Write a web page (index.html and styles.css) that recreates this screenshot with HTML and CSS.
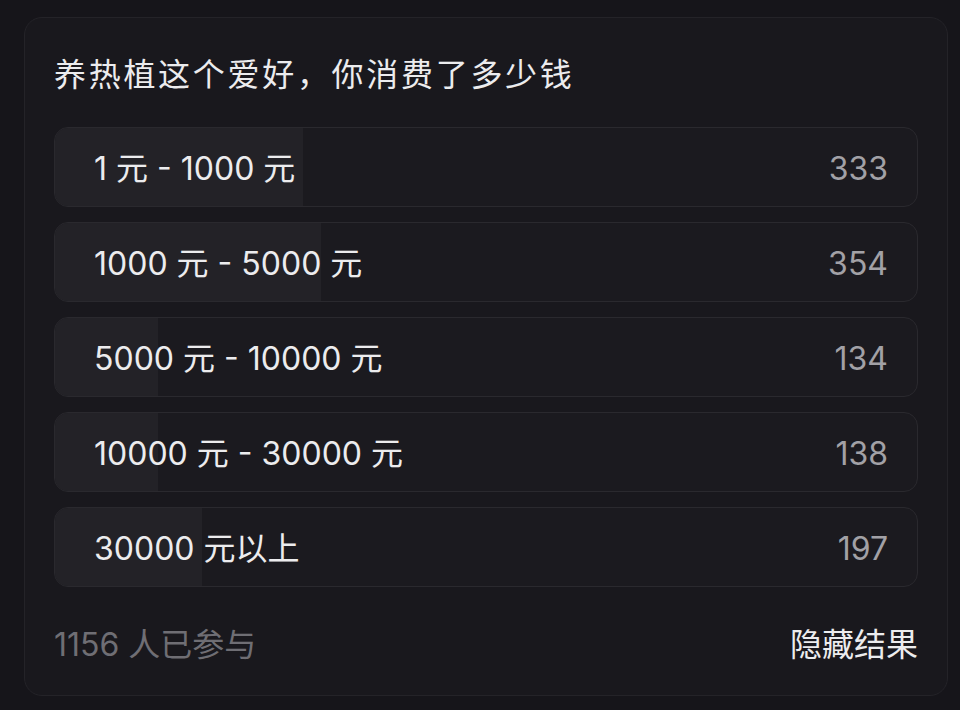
FILE: index.html
```html
<!DOCTYPE html>
<html lang="zh-CN">
<head>
<meta charset="utf-8">
<link rel="stylesheet" href="styles.css">
</head>
<body>
<div class="card">
  <div class="title">养热植这个爱好，你消费了多少钱</div>
  <div class="options">
    <div class="option"><div class="fill" style="width:28.8%"></div><span class="label">1 元 - 1000 元</span><span class="count">333</span></div>
    <div class="option"><div class="fill" style="width:30.9%"></div><span class="label">1000 元 - 5000 元</span><span class="count">354</span></div>
    <div class="option"><div class="fill" style="width:12%"></div><span class="label">5000 元 - 10000 元</span><span class="count">134</span></div>
    <div class="option"><div class="fill" style="width:12%"></div><span class="label">10000 元 - 30000 元</span><span class="count">138</span></div>
    <div class="option"><div class="fill" style="width:17%"></div><span class="label">30000 元以上</span><span class="count">197</span></div>
  </div>
  <div class="footer">
    <span class="total">1156 人已参与</span>
    <span class="hide">隐藏结果</span>
  </div>
</div>
</body>
</html>
```
FILE: styles.css
```css
html, body {
  margin: 0;
  background: #16151a;
  font-family: Inter, "Noto Sans CJK SC", sans-serif;
}
body {
  padding: 17px 12px 0 24px;
  height: 710px;
  box-sizing: border-box;
}
.card {
  box-sizing: border-box;
  height: 679px;
  background: #19181d;
  border: 1px solid #242328;
  border-radius: 18px;
  padding: 37px 29px 0 29px;
  display: flex;
  flex-direction: column;
}
.title {
  font-size: 32px;
  line-height: 40px;
  color: #ececee;
  letter-spacing: 2.7px;
  margin-bottom: 32px;
}
.options {
  display: flex;
  flex-direction: column;
  gap: 15px;
}
.option {
  position: relative;
  height: 80px;
  box-sizing: border-box;
  border: 1px solid #2a292e;
  border-radius: 14px;
  background: #1b1a1f;
  overflow: hidden;
  display: flex;
  align-items: center;
  justify-content: space-between;
  padding: 3px 29px 0 39px;
}
.fill {
  position: absolute;
  left: 0;
  top: 0;
  bottom: 0;
  background: #232227;
}
.label, .count {
  position: relative;
  font-size: 32px;
  line-height: 40px;
}
.label { color: #ececee; }
.count { color: #a2a1a6; }
.footer {
  margin-top: 38px;
  display: flex;
  justify-content: space-between;
  font-size: 32px;
  line-height: 40px;
}
.total { color: #6f6e74; }
.hide { color: #ececee; }
```
